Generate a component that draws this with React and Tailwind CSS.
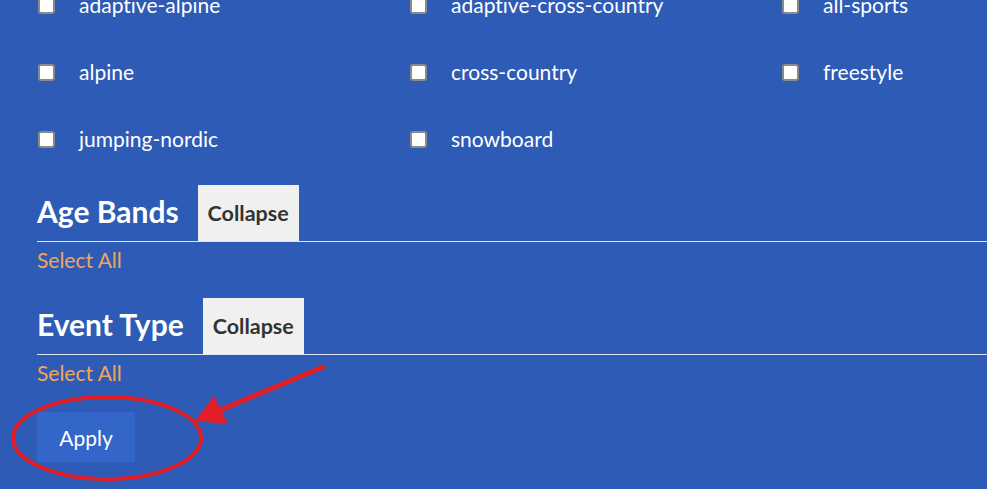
import React from 'react';

const sports = [
  'adaptive-alpine',
  'adaptive-cross-country',
  'all-sports',
  'alpine',
  'cross-country',
  'freestyle',
  'jumping-nordic',
  'snowboard',
];

function FilterHeader({ title }) {
  return (
    <div className="flex items-center gap-[19px] border-b border-[#dfe6f2]">
      <h2 className="mb-[4px] text-[30px] font-bold text-white leading-none">{title}</h2>
      <button className="h-[56px] px-[10px] bg-[#f0f0f0] text-[21.5px] font-bold text-[#333333]">
        Collapse
      </button>
    </div>
  );
}

function Annotation() {
  return (
    <svg
      className="absolute left-0 top-0 pointer-events-none"
      width="987"
      height="489"
      viewBox="0 0 987 489"
    >
      <ellipse cx="107" cy="438" rx="94" ry="41" fill="none" stroke="#e41e26" strokeWidth="4" />
      <line x1="323" y1="367" x2="218" y2="411" stroke="#e41e26" strokeWidth="5" strokeLinecap="round" />
      <polygon points="195,421 214,396 228,424" fill="#e41e26" />
    </svg>
  );
}

function App() {
  return (
    <div
      className="relative w-[987px] h-[489px] overflow-hidden bg-[#2d5bb5] pl-[37px] [font-variant-ligatures:none]"
      style={{ fontFamily: 'Lato, "Open Sans", sans-serif' }}
    >
      <div className="grid grid-cols-[372px_372px_206px] -mt-[29px]">
        {sports.map(s => (
          <label key={s} className="h-[67px] flex items-center gap-[24px] text-[21px] leading-none text-white">
            <input
              type="checkbox"
              className="appearance-none ml-[1px] mt-[2px] w-[17px] h-[17px] bg-white border-2 border-[#8a8a8a] rounded-[3px]"
            />
            <span className="pb-[1px]">{s}</span>
          </label>
        ))}
      </div>

      <div className="mt-[13px]">
        <FilterHeader title="Age Bands" />
        <div className="mt-[3px] text-[21px] leading-[30px] text-[#f0a65c]">Select All</div>
      </div>

      <div className="mt-[23px]">
        <FilterHeader title="Event Type" />
        <div className="mt-[3px] text-[21px] leading-[30px] text-[#f0a65c]">Select All</div>
      </div>

      <button className="mt-[24px] h-[50px] w-[98px] pt-[2px] bg-[#3465c9] text-[21px] text-white">
        Apply
      </button>

      <Annotation />
    </div>
  );
}

export default App;
